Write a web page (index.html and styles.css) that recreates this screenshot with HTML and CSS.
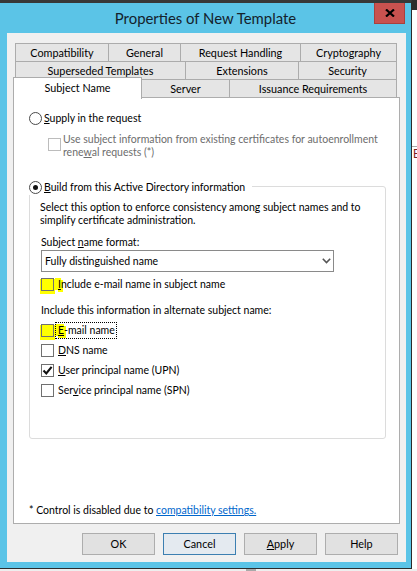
FILE: index.html
```html
<!DOCTYPE html>
<html>
<head>
<meta charset="utf-8">
<link rel="stylesheet" href="styles.css">
</head>
<body>
<div class="screen">
  <div class="toprow">
    <div class="window">
      <div class="titlebar">
        <div class="title">Properties of New Template</div>
        <div class="close">
          <svg width="10" height="8" viewBox="0 0 10 8"><path d="M1 0.5 L9 7.5 M9 0.5 L1 7.5" stroke="#000" stroke-width="2.2" fill="none"/></svg>
        </div>
      </div>
      <div class="client">
        <div class="tabs">
          <div class="tabrow">
            <div class="tab w-comp">Compatibility</div>
            <div class="tab w-gen">General</div>
            <div class="tab w-req">Request Handling</div>
            <div class="tab w-cry">Cryptography</div>
          </div>
          <div class="tabrow">
            <div class="tab w-sup">Superseded Templates</div>
            <div class="tab w-ext">Extensions</div>
            <div class="tab w-sec">Security</div>
          </div>
          <div class="tabrow">
            <div class="tab sel">Subject Name</div>
            <div class="tab w-srv">Server</div>
            <div class="tab w-iss">Issuance Requirements</div>
          </div>
        </div>
        <div class="panel">
          <div class="opt supply">
            <span class="radio"></span>
            <span><u>S</u>upply in the request</span>
          </div>
          <div class="renew">
            <span class="cb disabled"></span>
            <span class="renew-text">Use subject information from existing certificates for autoenrollment<br>rene<u>w</u>al requests (*)</span>
          </div>
          <div class="group">
            <div class="opt head">
              <span class="radio on"><span class="dot"></span></span>
              <span><u>B</u>uild from this Active Directory information</span>
            </div>
            <div class="desc">Select this option to enforce consistency among subject names and to<br>simplify certificate administration.</div>
            <div class="lbl fmt">Subject <u>n</u>ame format:</div>
            <div class="select">
              <span>Fully distinguished name</span>
              <svg width="9" height="6" viewBox="0 0 9 6"><path d="M0.8 0.8 L4.5 4.6 L8.2 0.8" stroke="#555" stroke-width="1.6" fill="none"/></svg>
            </div>
            <div class="cbrow first">
              <span class="cb hl"></span>
              <span><span class="hl-letter"><u>I</u></span>nclude e-mail name in subject name</span>
            </div>
            <div class="lbl alt">Include this information in alternate subject name:</div>
            <div class="cbrow email">
              <span class="cb hl"></span>
              <span class="focus"><span class="hl-letter"><u>E</u></span>-mail name</span>
            </div>
            <div class="cbrow">
              <span class="cb"></span>
              <span><u>D</u>NS name</span>
            </div>
            <div class="cbrow">
              <span class="cb"><svg width="11" height="11" viewBox="0 0 11 11"><path d="M1.5 5.5 L4.3 8.4 L9.6 1.8" stroke="#111" stroke-width="2.1" fill="none"/></svg></span>
              <span><u>U</u>ser principal name (UPN)</span>
            </div>
            <div class="cbrow">
              <span class="cb"></span>
              <span>Ser<u>v</u>ice principal name (SPN)</span>
            </div>
          </div>
          <div class="note">* Control is disabled due to <a class="link">compatibility settings.</a></div>
        </div>
        <div class="buttons">
          <div class="btn">OK</div>
          <div class="btn default">Cancel</div>
          <div class="btn"><u>A</u>pply</div>
          <div class="btn">Help</div>
        </div>
      </div>
    </div>
    <div class="side">
      <div class="side-top"></div>
      <div class="side-gap"></div>
      <div class="side-line"></div>
      <div class="side-e">E</div>
    </div>
  </div>
  <div class="bottom">
    <div class="bottom-sq"></div>
  </div>
</div>
</body>
</html>
```
FILE: styles.css
```css
html, body {
  margin: 0;
  padding: 0;
  background: #fff;
}
.screen {
  width: 417px;
  height: 571px;
  overflow: hidden;
  display: flex;
  flex-direction: column;
  background: #fff;
  font-family: Lato, "Liberation Sans", sans-serif;
  font-size: 10.8px;
  color: #000;
}
.toprow {
  display: flex;
  height: 569px;
  flex: none;
}
.window {
  width: 412px;
  height: 569px;
  box-sizing: border-box;
  flex: none;
  background: #5bc4e7;
  border-top: 3px solid #383838;
  border-right: 1px solid #2c2c2c;
  border-bottom: 1px solid #2c2c2c;
  display: flex;
  flex-direction: column;
}
.titlebar {
  height: 30px;
  flex: none;
  display: grid;
  grid-template-columns: 1fr auto 1fr;
}
.title {
  grid-column: 2;
  font-size: 14.9px;
  line-height: 31px;
  color: #14222c;
  white-space: nowrap;
}
.close {
  grid-column: 3;
  justify-self: end;
  width: 31px;
  height: 21px;
  margin-right: 6px;
  box-sizing: border-box;
  background: #c8524f;
  border: 1px solid #a9403d;
  border-top: none;
  display: flex;
  align-items: center;
  justify-content: center;
}
.client {
  margin: 0 5px 0 7px;
  height: 529px;
  flex: none;
  background: #f0f0f0;
  display: flex;
  flex-direction: column;
}
.tabs {
  margin: 10px 0 0 8px;
}
.tabrow {
  display: flex;
  height: 19px;
  margin-bottom: -1px;
}
.tab {
  box-sizing: border-box;
  flex: none;
  height: 19px;
  border: 1px solid #acacac;
  margin-right: -1px;
  background: #e5e5e5;
  text-align: center;
  line-height: 17px;
  white-space: nowrap;
}
.w-comp { width: 94px; }
.w-gen { width: 73px; }
.w-req { width: 121px; }
.w-cry { width: 97px; }
.w-sup { width: 171px; }
.w-ext { width: 114px; }
.w-sec { width: 99px; }
.w-srv { width: 89px; }
.w-iss { width: 168px; }
.tab.sel {
  width: 129px;
  height: 22px;
  margin: -2px -1px 0 -2px;
  background: #fff;
  border-bottom: none;
  line-height: 19px;
  position: relative;
  z-index: 1;
}
.panel {
  margin-left: 6px;
  width: 387px;
  height: 427px;
  box-sizing: border-box;
  flex: none;
  background: #fff;
  border: 1px solid #adadad;
  display: flex;
  flex-direction: column;
  white-space: nowrap;
  font-size: 10.5px;
}
.opt {
  display: flex;
  align-items: center;
  height: 16px;
}
.supply {
  margin: 12px 0 0 15px;
}
.radio {
  box-sizing: border-box;
  width: 13px;
  height: 13px;
  border: 1px solid #4a4a4a;
  border-radius: 50%;
  background: #fff;
  margin-right: 2px;
  flex: none;
  display: flex;
  align-items: center;
  justify-content: center;
}
.dot {
  width: 5px;
  height: 5px;
  border-radius: 50%;
  background: #111;
}
.renew {
  display: flex;
  align-items: flex-start;
  margin: 7px 0 0 34px;
  color: #6d6d6d;
  line-height: 13px;
}
.renew .cb {
  margin-top: 5px;
  margin-right: 2px;
}
.cb {
  box-sizing: border-box;
  width: 13px;
  height: 13px;
  border: 1px solid #707070;
  background: #fff;
  flex: none;
  display: flex;
  align-items: center;
  justify-content: center;
}
.cb.disabled {
  border-color: #bcbcbc;
}
.group {
  margin: 27px 0 0 15px;
  width: 357px;
  height: 253px;
  box-sizing: border-box;
  flex: none;
  border: 1px solid #dcdcdc;
  border-radius: 3px;
}
.head {
  width: max-content;
  margin: -8px 0 0 -1px;
  padding-right: 7px;
  background: #fff;
}
.desc {
  margin: 6px 0 0 10px;
  line-height: 13px;
}
.lbl {
  margin-left: 11px;
  line-height: 13px;
}
.fmt {
  margin-top: 9px;
}
.select {
  margin: 1px 0 0 11px;
  width: 293px;
  height: 22px;
  box-sizing: border-box;
  border: 1px solid #8a8a8a;
  background: #fff;
  display: flex;
  align-items: center;
  justify-content: space-between;
  padding: 0 2px 0 3px;
}
.cbrow {
  display: flex;
  align-items: center;
  height: 16px;
  margin: 4px 0 0 11px;
}
.cbrow .cb {
  margin-right: 4px;
}
.cbrow.first {
  margin-top: 4px;
}
.alt {
  margin-top: 12px;
}
.cbrow.email {
  margin-top: 5px;
}
.cb.hl {
  background: #ffff00;
  box-shadow: 0 2px 0 1px #ffff00;
}
.hl-letter {
  background: #ffff00;
  box-shadow: -3px 0 0 #ffff00, 0 2px 0 #ffff00, 2px 2px 0 #ffff00;
}
.cbrow.email .cb {
  margin-right: 2px;
}
.focus {
  padding: 0 1px 0 2px;
  outline: 1px dotted #000;
  line-height: 15px;
}
.note {
  margin: auto 0 6px 15px;
  line-height: 13px;
}
.link {
  color: #0066cc;
  text-decoration: underline;
}
.buttons {
  display: flex;
  justify-content: flex-end;
  gap: 8px;
  margin: 9px 8px 0 0;
}
.btn {
  width: 73px;
  height: 22px;
  box-sizing: border-box;
  border: 1px solid #adadad;
  background: #e1e1e1;
  text-align: center;
  line-height: 20px;
}
.btn.default {
  border-color: #3c7fb1;
  background: #e4eaf0;
}
.side {
  width: 5px;
  flex: none;
  display: flex;
  flex-direction: column;
  overflow: hidden;
}
.side-top {
  height: 10px;
  background: #2c2c2c;
}
.side-gap {
  height: 136px;
}
.side-line {
  height: 1px;
  background: #a8a8a8;
}
.side-e {
  color: #7d1f1f;
  font-family: "Liberation Sans", sans-serif;
  font-size: 12px;
  line-height: 14px;
  margin-left: 1px;
}
.bottom {
  height: 2px;
  flex: none;
  background: #eeeeee;
}
.bottom-sq {
  margin-left: 246px;
  width: 10px;
  height: 2px;
  background: #a9a9a9;
}
```
